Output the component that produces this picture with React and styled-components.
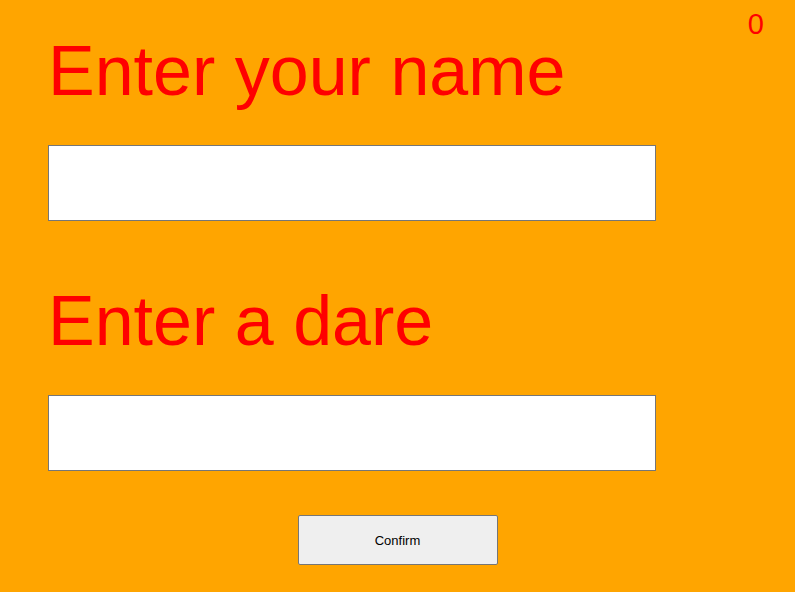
import React from 'react'
import styled, { createGlobalStyle } from 'styled-components'

function App() {
    return (
        <>
            <GlobalStyle />
            <Page>
                <Counter>0</Counter>
                <Form>
                    <Label>Enter your name</Label>
                    <Field type="text" />
                    <Label $spaced>Enter a dare</Label>
                    <Field type="text" />
                </Form>
                <ButtonRow>
                    <Confirm>Confirm</Confirm>
                </ButtonRow>
            </Page>
        </>
    )
}

const GlobalStyle = createGlobalStyle`
    html, body {
        margin: 0;
        padding: 0;
        background: #ffa500;
    }
`

const Page = styled.div`
    position: relative;
    width: 795px;
    height: 592px;
    background: #ffa500;
    font-family: 'Liberation Sans', Arial, sans-serif;
    overflow: hidden;
`

const Counter = styled.div`
    position: absolute;
    top: 8px;
    right: 31px;
    color: #ff0000;
    font-size: 29px;
    line-height: 32px;
`

const Form = styled.div`
    display: flex;
    flex-direction: column;
    align-items: flex-start;
    padding: 36px 0 0 48px;
`

const Label = styled.h1`
    margin: ${(p) => (p.$spaced ? '65px' : '0')} 0 39px 0;
    color: #ff0000;
    font-size: 70px;
    font-weight: normal;
    line-height: 70px;
`

const Field = styled.input`
    box-sizing: border-box;
    width: 608px;
    height: 76px;
    margin: 0;
    border: 1px solid #767676;
    background: #fff;
    font-size: 20px;
    padding: 0 8px;
    outline: none;
`

const ButtonRow = styled.div`
    display: flex;
    justify-content: center;
    padding-top: 44px;
`

const Confirm = styled.button`
    box-sizing: border-box;
    width: 200px;
    height: 50px;
    border: 1px solid #767676;
    border-radius: 2px;
    background: #efefef;
    color: #000;
    font-family: 'Liberation Sans', Arial, sans-serif;
    font-size: 13px;
`

export default App
